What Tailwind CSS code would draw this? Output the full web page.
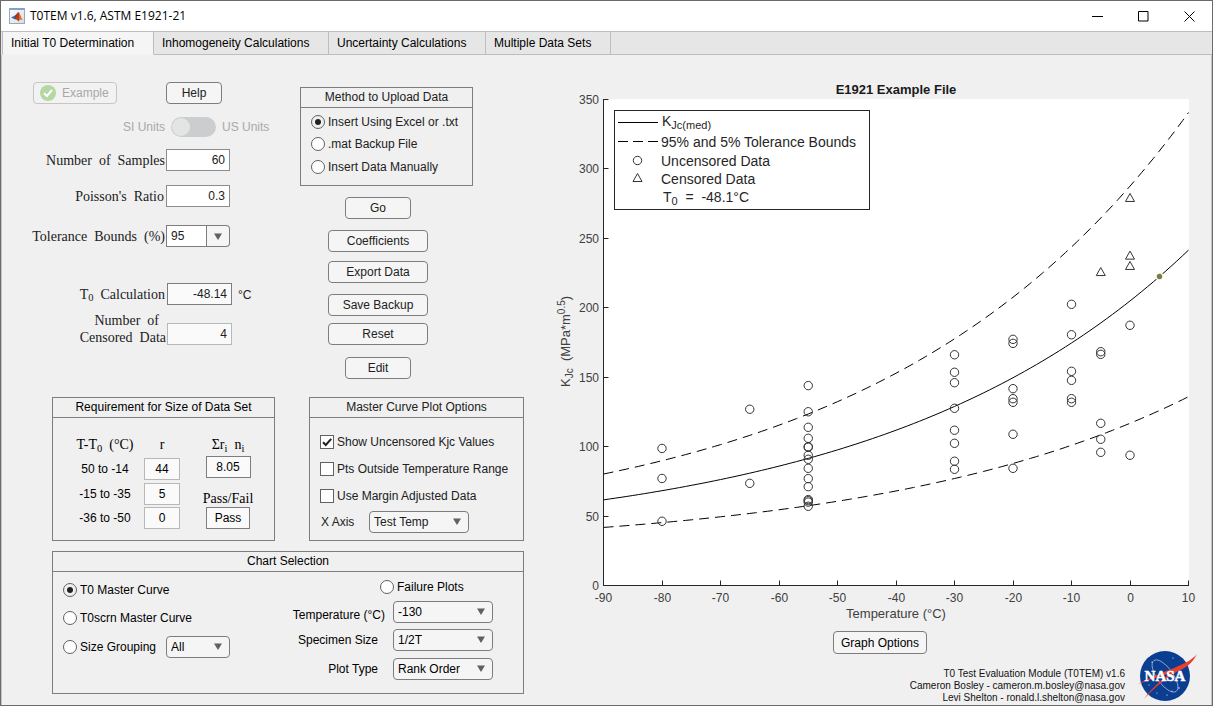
<!DOCTYPE html>
<html lang="en">
<head>
<meta charset="utf-8">
<title>T0TEM v1.6, ASTM E1921-21</title>
<script src="https://cdn.jsdelivr.net/npm/@tailwindcss/browser@4"></script>
</head>
<body class="flex min-h-screen flex-col border border-[#6b6b6b] bg-[#f0f0f0] font-['Liberation_Sans',Arial,sans-serif] text-[12px] leading-[14px] text-[#212121]">

<svg class="hidden" aria-hidden="true">
  <symbol id="arrow" viewBox="0 0 8 7"><path d="M0 .5h8L4 7z" fill="#616161"/></symbol>
</svg>

<header class="flex h-[30px] shrink-0 items-center bg-white pl-2 text-black">
  <svg class="h-4 w-4" viewBox="0 0 16 16" aria-hidden="true">
    <defs><linearGradient id="mg" x1="0" y1="0" x2="1" y2="1"><stop offset="0" stop-color="#fdfdfd"/><stop offset="1" stop-color="#d5dde6"/></linearGradient></defs>
    <rect x=".5" y=".5" width="15" height="15" fill="url(#mg)" stroke="#9aa7b5"/>
    <rect x="1" y="0" width="14" height="2" fill="#7aa3cf"/>
    <path d="M2 9.500 6 7.500l2 2.200L6 11.500z" fill="#2f6fb0"/>
    <path d="M6 7.500C7.500 6.500 8.500 4 9.500 4L8.500 9 6 11.500z" fill="#7b3c33"/>
    <path d="M9.500 4c1.200 0 2.500 6 4.500 8-2-1-3-.8-4.500 1.500C8.800 12.500 8 11 6.500 11.200 8 9.500 8.500 6 9.500 4z" fill="#e0702a"/>
    <path d="M9.500 4c.8 1.500.9 5.500 0 9.500C8.800 12.500 8 11 6.500 11.200 8 9.500 8.500 6 9.500 4z" fill="#b8381c"/>
  </svg>
  <h1 class="ml-[5px] font-['Open_Sans','Noto_Sans',sans-serif] text-[12px] leading-4">T0TEM v1.6, ASTM E1921-21</h1>
  <div class="ml-auto flex h-full">
    <button type="button" aria-label="Minimize" class="flex w-[45px] items-center justify-center"><svg class="h-[11px] w-[11px]" viewBox="0 0 11 11"><path d="M0 5.500h11" stroke="#000"/></svg></button>
    <button type="button" aria-label="Maximize" class="flex w-[46px] items-center justify-center"><svg class="h-[11px] w-[11px]" viewBox="0 0 11 11"><path d="M.5.5h9.500v9.500H.5z" fill="none" stroke="#000"/></svg></button>
    <button type="button" aria-label="Close" class="flex w-[46px] items-center justify-center"><svg class="h-[11px] w-[11px]" viewBox="0 0 11 11"><path d="M.5.5l10 10M10.500.5l-10 10" stroke="#000"/></svg></button>
  </div>
</header>

<nav role="tablist" class="flex h-6 shrink-0 border-t border-[#bdbdbd] bg-[#e6e6e6] pl-px text-black">
  <button type="button" role="tab" aria-selected="true" class="w-[152px] border border-t-0 border-[#bdbdbd] border-b-[#f3f3f3] bg-[#f5f5f5] pl-2 text-left">Initial T0 Determination</button>
  <button type="button" role="tab" aria-selected="false" class="w-[175px] border-r border-b border-[#bdbdbd] pl-2 text-left">Inhomogeneity Calculations</button>
  <button type="button" role="tab" aria-selected="false" class="w-[157px] border-r border-b border-[#bdbdbd] pl-2 text-left">Uncertainty Calculations</button>
  <button type="button" role="tab" aria-selected="false" class="w-[125px] border-r border-b border-[#bdbdbd] pl-2 text-left">Multiple Data Sets</button>
  <span class="flex-1 border-b border-[#bdbdbd]"></span>
</nav>

<main class="flex flex-1 border-x border-[#c4c4c4]">
  <div class="w-[522px] shrink-0 pt-[27px]">
    <div class="flex">
      <!-- Specimen parameters -->
      <section class="w-[298px] shrink-0">
        <div class="flex">
          <button type="button" disabled class="ml-[31px] flex h-[22px] w-[84px] items-center gap-[6px] rounded border border-[#c6c6c6] bg-[#f2f2f2] pl-[6px] text-[#a8a8a8]">
            <svg class="h-4 w-4" viewBox="0 0 16 16" aria-hidden="true"><circle cx="8" cy="8" r="8" fill="#b5d7a2"/><path d="M4 8.300 7 11l5-6" fill="none" stroke="#fff" stroke-width="2"/></svg>Example
          </button>
          <button type="button" class="ml-[49px] h-[22px] w-14 rounded border border-[#7d7d7d] bg-[#f5f5f5]">Help</button>
        </div>
        <div class="mt-3 flex h-[22px] items-center text-[#a8a8a8]">
          <span class="w-[163px] text-right">SI Units</span>
          <button type="button" role="switch" aria-checked="false" aria-label="SI or US units" disabled class="ml-[6px] h-5 w-[45px] rounded-full bg-[#cccdce] p-px"><span class="block h-[18px] w-[18px] rounded-full bg-[#e3e5e5]"></span></button>
          <span class="ml-[6px]">US Units</span>
        </div>
        <div class="mt-[11px] flex items-center">
          <label for="samples" class="w-[164px] pr-px text-right font-['Liberation_Serif',serif] text-[14px] leading-[17px]">Number&nbsp; of&nbsp; Samples</label>
          <input id="samples" value="60" class="h-[22px] w-16 border border-[#8c8c8c] bg-white pr-1 text-right">
        </div>
        <div class="mt-[14px] flex items-center">
          <label for="poisson" class="w-[164px] pr-[2px] text-right font-['Liberation_Serif',serif] text-[14px] leading-[17px]">Poisson's&nbsp; Ratio</label>
          <input id="poisson" value="0.3" class="h-[22px] w-16 border border-[#8c8c8c] bg-white pr-1 text-right">
        </div>
        <div class="mt-[18px] flex items-center">
          <label for="tol" class="w-[164px] pr-px text-right font-['Liberation_Serif',serif] text-[14px] leading-[17px]">Tolerance&nbsp; Bounds&nbsp; (%)</label>
          <input id="tol" value="95" class="h-[22px] w-[41px] border border-[#7d7d7d] bg-white pl-1">
          <button type="button" aria-label="Choose tolerance bounds" class="flex h-[22px] w-[23px] items-center justify-center rounded-r border border-l-0 border-[#7d7d7d] bg-[#f5f5f5]"><svg class="h-[7px] w-2"><use href="#arrow"/></svg></button>
        </div>
        <div class="mt-9 flex items-center">
          <label for="t0" class="w-[164px] pr-px text-right font-['Liberation_Serif',serif] text-[14px] leading-[17px]">T<sub>0</sub>&nbsp; Calculation</label>
          <input id="t0" readonly value="-48.14" class="ml-px h-[22px] w-[65px] border border-[#7d7d7d] bg-[#fafafa] pr-1 text-right">
          <span class="ml-[6px] pt-[2px]">°C</span>
        </div>
        <div class="mt-[7px] flex items-end">
          <label for="cens" class="w-[165px] pr-px text-right font-['Liberation_Serif',serif] text-[14px] leading-[17px]"><span class="pr-[7px]">Number&nbsp; of</span><br>Censored&nbsp; Data</label>
          <input id="cens" readonly value="4" class="mb-px h-[22px] w-[65px] border border-[#b8b8b8] bg-[#fafafa] pr-1 text-right">
        </div>
      </section>

      <!-- Upload method and actions -->
      <section class="w-[173px] shrink-0 pt-[5px]">
        <fieldset class="h-[99px] border border-[#7d7d7d]" aria-labelledby="upl">
          <h2 id="upl" class="h-5 border-b border-[#7d7d7d] text-center leading-[18px]">Method to Upload Data</h2>
          <div class="flex flex-col gap-2 pt-[7px] pl-[10px]">
            <label class="flex h-[14px] items-center gap-[3px]"><input type="radio" name="upload" checked class="h-[14px] w-[14px] appearance-none rounded-full border border-[#616161] bg-white bg-clip-content p-[3px] checked:bg-[radial-gradient(circle,#212121_0_3px,#fff_4px)]">Insert Using Excel or .txt</label>
            <label class="flex h-[14px] items-center gap-[3px]"><input type="radio" name="upload" class="h-[14px] w-[14px] appearance-none rounded-full border border-[#616161] bg-white">.mat Backup File</label>
            <label class="flex h-4 items-center gap-[3px]"><input type="radio" name="upload" class="h-[14px] w-[14px] appearance-none rounded-full border border-[#616161] bg-white">Insert Data Manually</label>
          </div>
        </fieldset>
        <div class="mt-[11px] flex w-[156px] flex-col items-center">
          <button type="button" class="h-[22px] w-[66px] rounded border border-[#7d7d7d] bg-[#f5f5f5]">Go</button>
          <button type="button" class="mt-[11px] h-[22px] w-[100px] rounded border border-[#7d7d7d] bg-[#f5f5f5]">Coefficients</button>
          <button type="button" class="mt-[9px] h-[22px] w-[100px] rounded border border-[#7d7d7d] bg-[#f5f5f5]">Export Data</button>
          <button type="button" class="mt-[11px] h-[22px] w-[100px] rounded border border-[#7d7d7d] bg-[#f5f5f5]">Save Backup</button>
          <button type="button" class="mt-[7px] h-[22px] w-[100px] rounded border border-[#7d7d7d] bg-[#f5f5f5]">Reset</button>
          <button type="button" class="mt-3 h-[22px] w-[66px] rounded border border-[#7d7d7d] bg-[#f5f5f5]">Edit</button>
        </div>
      </section>
    </div>

    <div class="mt-[18px] flex justify-between pl-[50px]">
      <!-- Data set size requirement -->
      <section class="h-36 w-[223px] border border-[#7d7d7d] text-black">
        <h2 class="h-5 border-b border-[#7d7d7d] text-center leading-[18px]">Requirement for Size of Data Set</h2>
        <div class="flex items-start pt-[15px]">
          <table class="ml-4 text-center">
            <thead>
              <tr class="h-6 font-['Liberation_Serif',serif] text-[14px]"><th class="w-[72px] p-0 font-normal">T-T<sub>0</sub>&nbsp; (°C)</th><th class="w-[42px] p-0 font-normal">r</th></tr>
            </thead>
            <tbody>
              <tr class="h-6"><td>50 to -14</td><td><input readonly aria-label="r, 50 to -14" value="44" class="mx-auto block h-[22px] w-9 border border-[#b8b8b8] bg-[#fafafa] text-center"></td></tr>
              <tr class="h-[25px]"><td>-15 to -35</td><td><input readonly aria-label="r, -15 to -35" value="5" class="mx-auto block h-[22px] w-9 border border-[#b8b8b8] bg-[#fafafa] text-center"></td></tr>
              <tr class="h-6"><td>-36 to -50</td><td><input readonly aria-label="r, -36 to -50" value="0" class="mx-auto block h-[22px] w-9 border border-[#b8b8b8] bg-[#fafafa] text-center"></td></tr>
            </tbody>
          </table>
          <div class="mt-px ml-[19px] flex w-[52px] flex-col items-center">
            <label for="sum" class="h-[22px] font-['Liberation_Serif',serif] text-[14px] leading-[22px]">Σr<sub>i</sub>&nbsp; n<sub>i</sub></label>
            <input id="sum" readonly value="8.05" class="h-[22px] w-[45px] border border-[#7d7d7d] bg-[#fafafa] text-center">
            <label for="pass" class="mt-3 font-['Liberation_Serif',serif] text-[14px] leading-[17px]">Pass/Fail</label>
            <input id="pass" readonly value="Pass" class="h-[22px] w-[44px] border border-[#7d7d7d] bg-[#fafafa] text-center">
          </div>
        </div>
      </section>

      <!-- Plot options -->
      <section class="h-36 w-[215px] border border-[#7d7d7d]">
        <h2 class="h-5 border-b border-[#7d7d7d] text-center leading-[18px]">Master Curve Plot Options</h2>
        <div class="flex flex-col gap-[13px] pt-[17px] pl-[10px]">
          <label class="flex h-[14px] items-center gap-[3px]"><span class="relative h-[14px] w-[14px]"><input type="checkbox" checked class="block h-[14px] w-[14px] appearance-none border border-[#616161] bg-white"><svg class="pointer-events-none absolute inset-0" viewBox="0 0 14 14"><path d="M3 7.200 5.800 10l5.400-6.200" fill="none" stroke="#212121" stroke-width="2"/></svg></span>Show Uncensored Kjc Values</label>
          <label class="flex h-[14px] items-center gap-[3px]"><input type="checkbox" class="h-[14px] w-[14px] appearance-none border border-[#616161] bg-white">Pts Outside Temperature Range</label>
          <label class="flex h-[14px] items-center gap-[3px]"><input type="checkbox" class="h-[14px] w-[14px] appearance-none border border-[#616161] bg-white">Use Margin Adjusted Data</label>
        </div>
        <div class="mt-2 flex items-center pl-[11px]">
          <label for="xaxis" class="w-12">X Axis</label>
          <span class="relative"><select id="xaxis" class="block h-[22px] w-[100px] appearance-none rounded border border-[#7d7d7d] bg-[#f5f5f5] pl-1"><option>Test Temp</option></select><svg class="pointer-events-none absolute top-[7px] right-2 h-[7px] w-2"><use href="#arrow"/></svg></span>
        </div>
      </section>
    </div>

    <!-- Chart selection -->
    <section class="mt-[10px] ml-[50px] h-[143px] border border-[#7d7d7d] text-black">
      <h2 class="h-5 border-b border-[#7d7d7d] text-center leading-[18px]">Chart Selection</h2>
      <div class="flex">
        <div class="flex w-[230px] flex-col gap-[9px] pt-2 pl-[10px]">
          <label class="flex h-5 items-center gap-[3px]"><input type="radio" name="chart" checked class="h-[14px] w-[14px] appearance-none rounded-full border border-[#616161] bg-white bg-clip-content p-[3px] checked:bg-[radial-gradient(circle,#212121_0_3px,#fff_4px)]">T0 Master Curve</label>
          <label class="flex h-[18px] items-center gap-[3px]"><input type="radio" name="chart" class="h-[14px] w-[14px] appearance-none rounded-full border border-[#616161] bg-white">T0scrn Master Curve</label>
          <div class="flex items-center">
            <label class="flex w-[103px] items-center gap-[3px]"><input type="radio" name="chart" class="h-[14px] w-[14px] appearance-none rounded-full border border-[#616161] bg-white">Size Grouping</label>
            <span class="relative"><select aria-label="Size group" class="block h-[22px] w-16 appearance-none rounded border border-[#7d7d7d] bg-[#f5f5f5] pl-1"><option>All</option></select><svg class="pointer-events-none absolute top-[7px] right-2 h-[7px] w-2"><use href="#arrow"/></svg></span>
          </div>
        </div>
        <div class="flex-1 pt-2">
          <label class="ml-[97px] flex h-[14px] items-center gap-[3px]"><input type="radio" name="chart" class="h-[14px] w-[14px] appearance-none rounded-full border border-[#616161] bg-white">Failure Plots</label>
          <div class="mt-[7px] flex items-center">
            <label for="temp" class="w-[110px] pt-[6px] pr-2 text-right">Temperature (°C)</label>
            <span class="relative"><select id="temp" class="block h-[22px] w-[100px] appearance-none rounded border border-[#7d7d7d] bg-[#f5f5f5] pl-1"><option>-130</option></select><svg class="pointer-events-none absolute top-[7px] right-2 h-[7px] w-2"><use href="#arrow"/></svg></span>
          </div>
          <div class="mt-[6px] flex items-center">
            <label for="size" class="w-[110px] pr-[15px] text-right">Specimen Size</label>
            <span class="relative"><select id="size" class="block h-[22px] w-[100px] appearance-none rounded border border-[#7d7d7d] bg-[#f5f5f5] pl-1"><option>1/2T</option></select><svg class="pointer-events-none absolute top-[7px] right-2 h-[7px] w-2"><use href="#arrow"/></svg></span>
          </div>
          <div class="mt-[7px] flex items-center">
            <label for="ptype" class="w-[110px] pr-[15px] text-right">Plot Type</label>
            <span class="relative"><select id="ptype" class="block h-[22px] w-[100px] appearance-none rounded border border-[#7d7d7d] bg-[#f5f5f5] pl-1"><option>Rank Order</option></select><svg class="pointer-events-none absolute top-[7px] right-2 h-[7px] w-2"><use href="#arrow"/></svg></span>
          </div>
        </div>
      </div>
    </section>
  </div>

  <!-- Plot -->
  <section class="flex min-w-0 flex-1 flex-col pt-[25px] pr-[15px] pl-8">
    <svg id="plot" class="w-full" viewBox="0 0 640 544" role="img" aria-label="E1921 Example File: KJc against temperature" fill="#404040" font-size="12">
      <rect x="47" y="19" width="586" height="487" fill="#fff"/>
      <text x="340" y="14" text-anchor="middle" font-size="13" font-weight="bold" fill="#1a1a1a">E1921 Example File</text>
      <g id="curves" fill="none" stroke="#000"></g>
      <g id="points" fill="none" stroke="#333"></g>
      <circle cx="603.500" cy="196.500" r="4" fill="#ffffcc"/><circle cx="603.500" cy="196.500" r="2.700" fill="#777768"/>
      <path d="M47.500 19v486.500H633" fill="none" stroke="#262626"/>
      <g id="axes"></g>
      <text x="340" y="538" text-anchor="middle" font-size="13">Temperature (°C)</text>
      <text transform="translate(14 307) rotate(-90)" font-size="13" xml:space="preserve">K<tspan dy="3" font-size="10">Jc</tspan><tspan dy="-3">  (MPa*m</tspan><tspan dy="-5" font-size="10">0.5</tspan><tspan dy="5">)</tspan></text>
      <g font-size="14" fill="#262626">
        <rect x="58.500" y="30.500" width="255" height="99" fill="#fff" stroke="#262626"/>
        <path d="M62 42.500h40" stroke="#000"/>
        <path d="M62 61.500h40" stroke="#000" stroke-dasharray="10 5"/>
        <circle cx="81.500" cy="80.500" r="4.200" fill="none" stroke="#333"/>
        <path d="M81.500 93.500l4.500 8h-9z" fill="none" stroke="#333"/>
        <text x="106" y="46">K<tspan dy="3" font-size="11">Jc(med)</tspan></text>
        <text x="105" y="67">95% and 5% Tolerance Bounds</text>
        <text x="105" y="86">Uncensored Data</text>
        <text x="105" y="104">Censored Data</text>
        <text x="107" y="122" xml:space="preserve">T<tspan dy="3" font-size="11">0</tspan><tspan dy="-3">  =  -48.1°C</tspan></text>
      </g>
    </svg>
    <div class="mt-[7px] flex justify-center pl-2">
      <button type="button" class="h-[23px] w-[94px] rounded border border-[#7d7d7d] bg-[#f5f5f5] text-black">Graph Options</button>
    </div>
    <footer class="-mt-1 flex items-start justify-end">
      <address class="pt-[18px] text-right text-[10px] leading-3 text-[#111] not-italic">T0 Test Evaluation Module (T0TEM) v1.6<br>Cameron Bosley - cameron.m.bosley@nasa.gov<br>Levi Shelton - ronald.l.shelton@nasa.gov</address>
      <svg class="-mr-px ml-3 h-[52px] w-[60px]" viewBox="0 0 60 52" role="img" aria-label="NASA">
        <circle cx="28" cy="26" r="25" fill="#0b3d91"/>
        <g fill="#fff"><circle cx="15" cy="12" r=".6"/><circle cx="36" cy="8" r=".6"/><circle cx="42" cy="38" r=".7"/><circle cx="30" cy="45" r=".6"/><circle cx="35" cy="41" r=".6"/><circle cx="12" cy="35" r=".5"/><circle cx="20" cy="43" r=".5"/></g>
        <ellipse cx="28" cy="26" rx="8" ry="19" transform="rotate(-36 28 26)" fill="none" stroke="#fff" stroke-width=".8" opacity=".6"/>
        <path d="M60 4C50 16 29 19 1 34c14-5 25-9 33-11C23 31 14 39 7 49 20 35 30 28 41 21 51 17 56 12 60 4z" fill="#e8402c"/>
        <text x="28" y="31" text-anchor="middle" font-family="Liberation Serif" font-weight="bold" font-size="15" fill="#fff" stroke="#fff" stroke-width=".5">NASA</text>
      </svg>
    </footer>
  </section>
</main>

<script>
const X = t => 47.5 + (t + 90) * 5.85;
const Y = k => 505.5 - k * 1.39;
const T0 = -48.14;
const curve = f => {
  let d = '';
  for (let t = -90; t <= 10; t++) d += (d ? 'L' : 'M') + X(t).toFixed(2) + ' ' + Y(f(t)).toFixed(2);
  return d;
};
const bound = p => t => 20 + Math.pow(-Math.log(1 - p), 0.25) * (11 + 77 * Math.exp(0.019 * (t - T0)));
document.getElementById('curves').innerHTML =
  `<path d="${curve(t => 30 + 70 * Math.exp(0.019 * (t - T0)))}"/>` +
  `<path stroke-dasharray="10 6" d="${curve(bound(0.95))}"/>` +
  `<path stroke-dasharray="10 6" d="${curve(bound(0.05))}"/>`;

const uncensored = {
  '-80': [98.6, 77, 46.2],
  '-65': [126.8, 73.5],
  '-55': [143.8, 125, 113.8, 105.9, 99.9, 99.4, 93.7, 90.8, 84.3, 76.9, 71.1, 61.8, 61, 60, 57],
  '-30': [166, 153.4, 145.9, 127.5, 111.7, 102.3, 89.4, 83.6],
  '-20': [177.1, 174.2, 141.6, 134.4, 131.8, 108.8, 84.3],
  '-10': [202.3, 180.4, 154.1, 147.6, 134.4, 131.8],
  '-5': [168.2, 166.3, 116.7, 105.2, 95.8],
  '0': [187.2, 93.7]
};
const censored = [[0, 278.8], [0, 237.3], [0, 229.9], [-5, 225.5]];
let pts = '';
for (const t in uncensored) for (const k of uncensored[t]) pts += `<circle cx="${X(+t)}" cy="${Y(k)}" r="4.2"/>`;
for (const [t, k] of censored) pts += `<path d="M${X(t)} ${Y(k) - 4.5}l4.500 8h-9z"/>`;
document.getElementById('points').innerHTML = pts;

let axes = '';
for (let t = -90; t <= 10; t += 10) {
  const x = Math.floor(X(t)) + 0.5;
  axes += `<path d="M${x} 505.500v-5" stroke="#262626"/><text x="${x}" y="522" text-anchor="middle">${t}</text>`;
}
for (let k = 0; k <= 350; k += 50) {
  const y = Math.floor(Y(k)) + 0.5;
  axes += `<path d="M47.500 ${y}h5" stroke="#262626"/><text x="43" y="${y + 4}" text-anchor="end">${k}</text>`;
}
document.getElementById('axes').innerHTML = axes;
</script>
</body>
</html>
